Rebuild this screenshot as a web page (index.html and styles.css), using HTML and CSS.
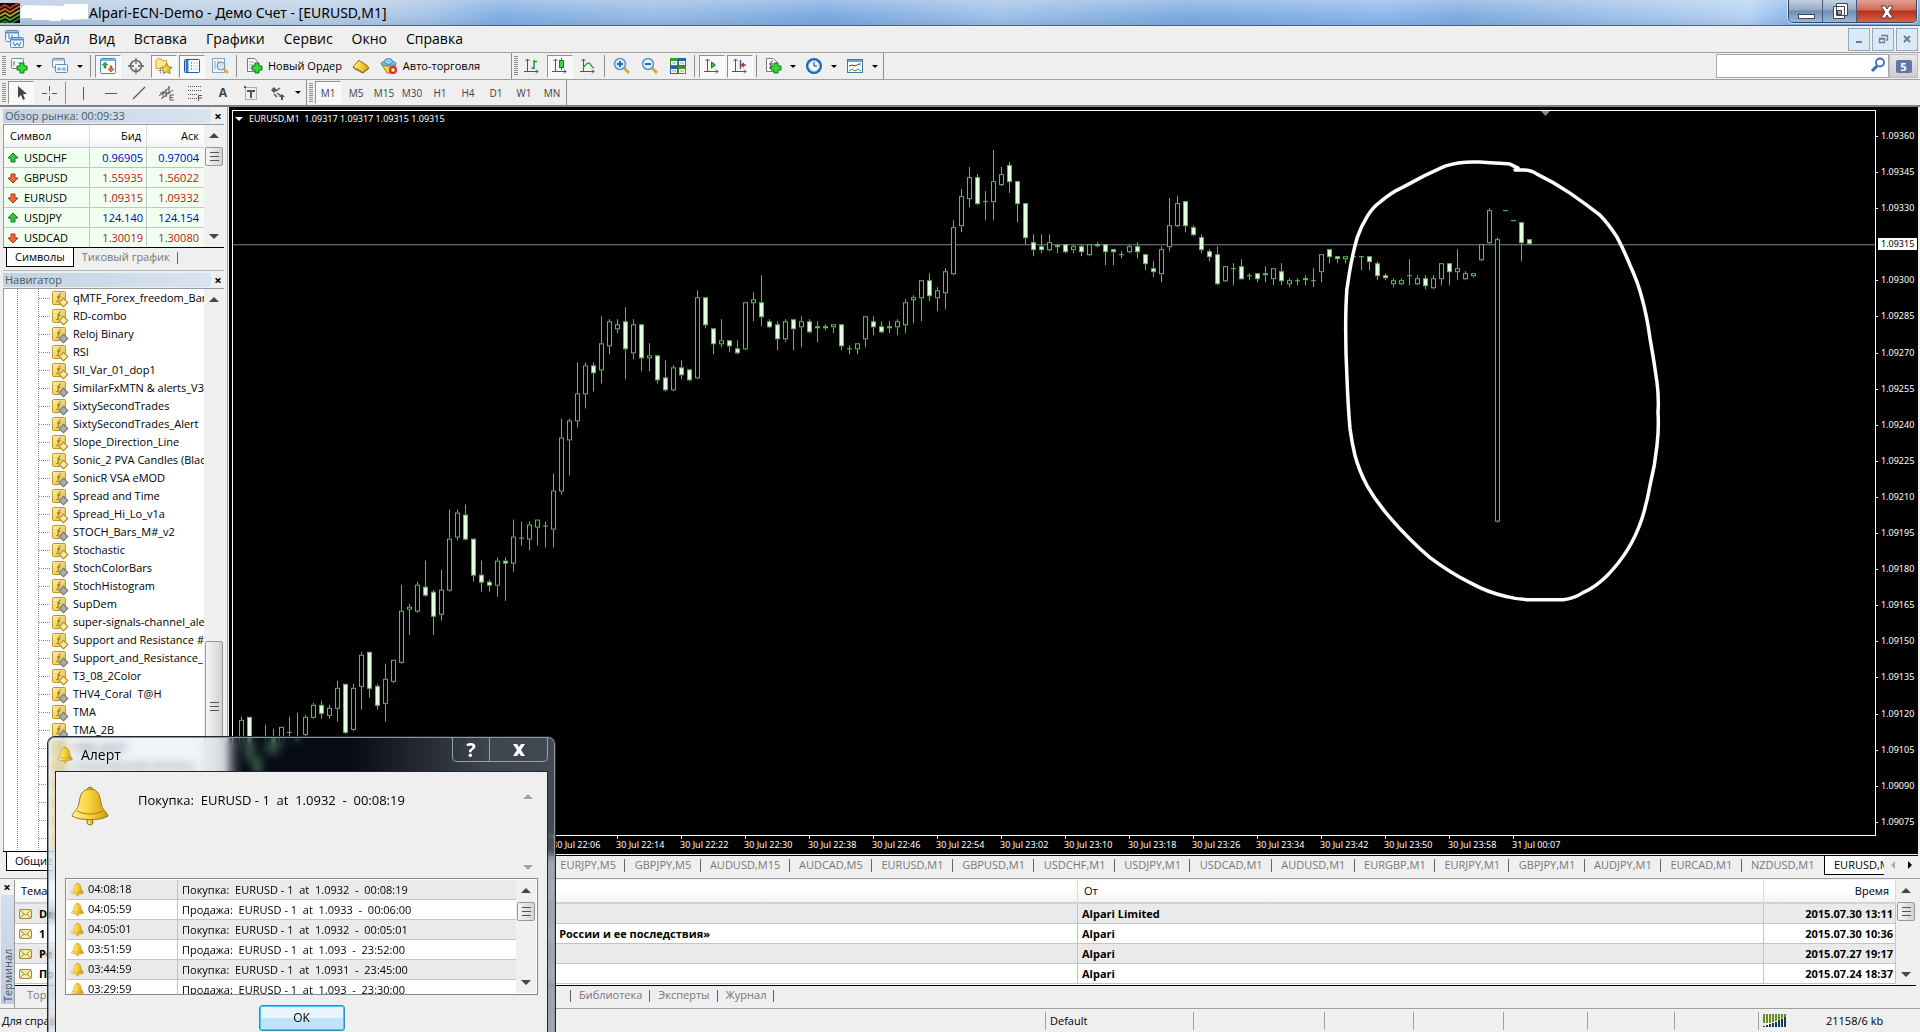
FILE: index.html
```html
<!DOCTYPE html>
<html lang="ru">
<head>
<meta charset="utf-8">
<title>Alpari-ECN-Demo - Демо Счет - [EURUSD,M1]</title>
<link rel="stylesheet" href="styles.css">
</head>
<body>
<svg class="defs" aria-hidden="true">
  <defs>
    <linearGradient id="gold" x1="0" y1="0" x2="1" y2="0"><stop offset="0" stop-color="#fff2a0"/><stop offset=".45" stop-color="#f8d63c"/><stop offset="1" stop-color="#cf9c14"/></linearGradient>
    <linearGradient id="fy" x1="0" y1="0" x2="1" y2="1"><stop offset="0" stop-color="#fff0a8"/><stop offset="1" stop-color="#e3b93a"/></linearGradient>
  </defs>
  <symbol id="new-chart" viewBox="0 0 18 18"><rect x="1.500" y="1.500" width="12" height="10" rx="1" fill="#f4faff" stroke="#5a8db8"/><path d="M4 4v5M3 6h2M8 6h3" stroke="#5a8db8"/><path d="M10 6h4v3h3v4h-3v3h-4v-3H7V9h3z" fill="#2fdc3a" stroke="#0a7a14"/></symbol>
  <symbol id="profiles" viewBox="0 0 18 18"><g fill="#eef6fd" stroke="#5a8db8"><rect x="1.500" y="1.500" width="12" height="9" rx="1"/><rect x="4.500" y="7.500" width="12" height="8" rx="1"/></g><path d="M2 3h11M6 12h9M8 10v4M13 10v4" stroke="#6d9cc4"/></symbol>
  <symbol id="market" viewBox="0 0 18 18"><rect x="1.500" y="1.500" width="15" height="15" rx="1" fill="#fff" stroke="#4a88c0"/><path d="M2 3h14" stroke="#7db4e0" stroke-width="2"/><path d="M6 5l3 3H7v3H5V8H3z" fill="#38b838" stroke="#1a7a1a" stroke-width=".6"/><path d="M12 15l-3-3h2V9h2v3h2z" fill="#f07040" stroke="#b03010" stroke-width=".6"/></symbol>
  <symbol id="target" viewBox="0 0 18 18"><circle cx="9" cy="9" r="5.500" fill="none" stroke="#666" stroke-width="1.500"/><path d="M9 1v6M9 11v6M1 9h6M11 9h6" stroke="#666" stroke-width="1.300"/></symbol>
  <symbol id="nav" viewBox="0 0 20 18"><path d="M1 12V3l2-2h4l1 2h5v8z" fill="#ffe98a" stroke="#c79c22"/><path d="M6 12v5M4 14h5" stroke="#333" stroke-dasharray="1 1"/><path d="M13 6l2 4 4 .5-3 3 .8 4-3.800-2-3.800 2 .8-4-3-3 4-.5z" fill="url(#gold)" stroke="#a87a10"/></symbol>
  <symbol id="term" viewBox="0 0 18 18"><rect x="1.500" y="2.500" width="15" height="13" rx="1" fill="#fff" stroke="#1d5b9c"/><path d="M4 3v12" stroke="#2f7cc8" stroke-width="3"/><path d="M8 6h1M8 9h1M8 12h1" stroke="#333"/><path d="M10 6h5M10 9h5M10 12h5" stroke="#b8cde0"/></symbol>
  <symbol id="tester" viewBox="0 0 18 18"><rect x="1.500" y="1.500" width="12" height="14" fill="#f1f7fc" stroke="#7ba6cb"/><path d="M4 4v8M7 3v8M10 4v6" stroke="#7ba6cb"/><circle cx="10" cy="9" r="4" fill="#cfe6f6" fill-opacity=".8" stroke="#5c8fb8"/><path d="M13 12l4 4" stroke="#e0ac32" stroke-width="2.500"/></symbol>
  <symbol id="order" viewBox="0 0 18 18"><path d="M2.500 1.500h7l3 3v10h-10z" fill="#fff" stroke="#777"/><path d="M4 5h5M4 8h6M4 11h4" stroke="#999"/><path d="M10 6h4v3h3v4h-3v3h-4v-3H7V9h3z" fill="#2fdc3a" stroke="#0a7a14"/></symbol>
  <symbol id="book" viewBox="0 0 18 18"><path d="M1 10l6-7c1 2 8 4 10 8l-6 5C9 13 4 12 1 10z" fill="url(#gold)" stroke="#8f6508"/><path d="M1 10c1 3 6 3 9 6l7-5" fill="none" stroke="#8f6508"/></symbol>
  <symbol id="auto" viewBox="0 0 18 18"><path d="M2 8h14l-4 8H7z" fill="#f5d040" stroke="#a87a10"/><ellipse cx="8.500" cy="6.500" rx="7.500" ry="2.500" fill="#7cc0e8" stroke="#3a86b8"/><ellipse cx="8.500" cy="4.500" rx="4" ry="3" fill="#8fd0f2" stroke="#3a86b8"/><circle cx="13" cy="13" r="4" fill="#d8301c"/><rect x="11.500" y="11.500" width="3" height="3" fill="#fff"/></symbol>
  <symbol id="axes" viewBox="0 0 18 18"><path d="M4.500 2v13M1 14.500h14M2.500 4l2-2 2 2M13 12.500l2 2-2 2" fill="none" stroke="#555"/></symbol>
  <symbol id="bars" viewBox="0 0 18 18"><use href="#axes"/><path d="M11 3v9M8.500 11H11M11 4.500h3" stroke="#1e9a28" stroke-width="1.500"/></symbol>
  <symbol id="candles" viewBox="0 0 18 18"><use href="#axes"/><path d="M10.500 1v12" stroke="#1a7a20"/><rect x="8.500" y="3.500" width="4" height="7" fill="#38d840" stroke="#1a7a20"/></symbol>
  <symbol id="line" viewBox="0 0 18 18"><use href="#axes"/><path d="M4 11c2-2 4-6 6-5s2 4 5 5" fill="none" stroke="#2a9a34" stroke-width="1.300"/></symbol>
  <symbol id="zin" viewBox="0 0 18 18"><path d="M11 11l5 5" stroke="#d8a83a" stroke-width="3"/><circle cx="7" cy="7" r="5.500" fill="#d6ebfc" stroke="#5c96cc" stroke-width="1.500"/><path d="M4 7h6M7 4v6" stroke="#2b6cb0" stroke-width="2"/></symbol>
  <symbol id="zout" viewBox="0 0 18 18"><path d="M11 11l5 5" stroke="#d8a83a" stroke-width="3"/><circle cx="7" cy="7" r="5.500" fill="#d6ebfc" stroke="#5c96cc" stroke-width="1.500"/><path d="M4 7h6" stroke="#2b6cb0" stroke-width="2"/></symbol>
  <symbol id="tiles" viewBox="0 0 18 18"><path d="M1 1h8v8H1zM9 9h8v8H9z" fill="#3c9a1c"/><path d="M9 1h8v8H9zM1 9h8v8H1z" fill="#2a62a8"/><path d="M2 4h6v4H2zM10 4h6v4h-6zM2 12h6v4H2zM10 12h6v4h-6z" fill="#f4f8ff"/><path d="M3 6h4M11 6h4M3 14h4M11 14h4" stroke="#8ab"/></symbol>
  <symbol id="scroll" viewBox="0 0 18 18"><use href="#axes"/><path d="M8.500 5v6l4-3z" fill="#38c040" stroke="#1a7a20"/></symbol>
  <symbol id="shift" viewBox="0 0 18 18"><use href="#axes"/><path d="M9.500 3v9" stroke="#2a62a8" stroke-width="1.500"/><path d="M15 8h-4M13 6l-2.500 2 2.500 2" fill="none" stroke="#b83c18" stroke-width="1.500"/></symbol>
  <symbol id="indic" viewBox="0 0 18 18"><path d="M2.500 1.500h7l3 3v10h-10z" fill="#fff" stroke="#777"/><path d="M9 4H8c-1 0-1 1-1.500 7H5M5 7h4" fill="none" stroke="#444"/><path d="M10 6h4v3h3v4h-3v3h-4v-3H7V9h3z" fill="#2fdc3a" stroke="#0a7a14"/></symbol>
  <symbol id="clock" viewBox="0 0 18 18"><circle cx="9" cy="9" r="8" fill="#1c66b4"/><circle cx="9" cy="9" r="5.500" fill="#f2f8ff" stroke="#7db7e8"/><path d="M9 5v4h3" fill="none" stroke="#234"/></symbol>
  <symbol id="template" viewBox="0 0 18 18"><rect x="1.500" y="2.500" width="15" height="13" fill="#fff" stroke="#3f78ac"/><path d="M2 4h14" stroke="#6aa4d8" stroke-width="2"/><path d="M3 9l3-1 3 1 4-2h2" fill="none" stroke="#7a3020"/><path d="M3 14l3-2 3 2 3-2 3 2" fill="none" stroke="#2a9a34"/></symbol>
  <symbol id="cursor" viewBox="0 0 18 18"><path d="M6 2v12l3-3 2 5 2-1-2-5h4z" fill="#444"/></symbol>
  <symbol id="cross" viewBox="0 0 18 18"><path d="M9.500 2v5M9.500 12v5M2 9.500h5M12 9.500h5M9 9.500h1" stroke="#555"/></symbol>
  <symbol id="vl" viewBox="0 0 18 18"><path d="M9.500 3v13" stroke="#555"/></symbol>
  <symbol id="hl" viewBox="0 0 18 18"><path d="M3 9.500h12" stroke="#555"/></symbol>
  <symbol id="dl" viewBox="0 0 18 18"><path d="M3 15L15 3" stroke="#555" stroke-width="1.200"/></symbol>
  <symbol id="chan" viewBox="0 0 18 18"><path d="M1 12l11-9M3 15L15 6M5 7v7M8 5v8M11 2v8M2 9h9" stroke="#555"/><path d="M16 11h-4v5h4M12 13.500h3" fill="none" stroke="#555"/></symbol>
  <symbol id="fib" viewBox="0 0 18 18"><path d="M2 2.500h14M2 6.500h14M2 10.500h9M2 14.500h9" stroke="#555" stroke-dasharray="1 1"/><path d="M16 11.500h-3.500V17M13 14h3" fill="none" stroke="#555"/></symbol>
  <symbol id="label" viewBox="0 0 18 18"><rect x="3.500" y="3.500" width="11" height="12" fill="none" stroke="#666" stroke-dasharray="1 1"/><path d="M2 2h2v2H2zM5 6h8v2h-3v6H8V8H5z" fill="#555"/></symbol>
  <symbol id="arrows" viewBox="0 0 18 18"><path d="M5 3l3 3-3 3-3-3zM13 10l3 3h-2v3h-2v-3h-2z" fill="#555"/><path d="M11 4L7 7M8 9l4 3M5 10l3 3" stroke="#555" stroke-width="1.500"/></symbol>
  <symbol id="fx" viewBox="0 0 16 16"><rect x="1.500" y="1.500" width="13" height="13" rx="1" fill="url(#fy)" stroke="#c09a28"/><path d="M10 4C8 3.500 8 5 7 11.500H5.500M6 7h3.500" fill="none" stroke="#8a6a14"/></symbol>
  <symbol id="up" viewBox="0 0 12 12"><path d="M6 1l5 5H8v4H4V6H1z" fill="#3cc24a" stroke="#127a20"/></symbol>
  <symbol id="down" viewBox="0 0 12 12"><path d="M6 11L1 6h3V2h4v4h3z" fill="#f46a3c" stroke="#a83010"/></symbol>
  <symbol id="bell" viewBox="0 0 38 40"><ellipse cx="19" cy="36" rx="3" ry="3" fill="url(#gold)" stroke="#9a7210"/><circle cx="19" cy="3.500" r="2.500" fill="url(#gold)" stroke="#9a7210"/><path d="M19 3c-9 0-10 8-11 14-1 7-6 9-7 13 8 5 28 5 36 0-1-4-6-6-7-13C29 11 28 3 19 3z" fill="url(#gold)" stroke="#9a7210"/><path d="M6 25c8 4 18 4 26 0" fill="none" stroke="#a87a10"/></symbol>
  <symbol id="mail" viewBox="0 0 14 12"><rect x=".5" y="1.500" width="12" height="9" rx="1" fill="#f8ecac" stroke="#a08c3c"/><path d="M1 2l5.500 5L12 2M1 10l4-4M12 10L8 6" fill="none" stroke="#a08c3c"/></symbol>
</svg>

<header class="titlebar">
  <svg class="logo" viewBox="0 0 20 20" preserveAspectRatio="none"><rect width="20" height="20" fill="#080808"/><g fill="none" stroke-width="2"><path d="M0 5l5-3 5 3 5-3 5-2" stroke="#c03020"/><path d="M0 9l5-3 5 3 5-3 5-3" stroke="#d06020"/><path d="M0 13l5-3 5 3 5-3 5-3" stroke="#b0a020"/><path d="M0 17l5-3 5 3 5-3 5-3" stroke="#50a020"/><path d="M0 21l5-3 5 3 5-3 5-3" stroke="#207820"/></g></svg>
  <svg class="scrub" viewBox="0 0 68 17" preserveAspectRatio="none"><path d="M1 4L4 1l40 1V0h24v15l-24 1-3-1v2H31l-3-1H13l-2-2H0z" fill="#fff"/></svg>
  <h1>Alpari-ECN-Demo - Демо Счет - [EURUSD,M1]</h1>
  <div class="winctl">
    <button aria-label="Свернуть"><svg width="20" height="18"><rect x="2.500" y="12.500" width="16" height="4" fill="#fff" stroke="#445"/></svg></button>
    <button aria-label="Развернуть"><svg width="20" height="18"><path d="M6.500 1.500h11v12h-11zM3.500 4.500h11v12h-11z" fill="#fff" stroke="#445"/><rect x="7.500" y="8.500" width="4" height="4" fill="#9ab" stroke="#445"/></svg></button>
    <button class="close" aria-label="Закрыть"><svg width="20" height="18"><path d="M4 4h4l2 3 2-3h4l-4 6 4 6h-4l-2-3-2 3H4l4-6z" fill="#fff" stroke="#544"/></svg></button>
  </div>
</header>

<nav class="menubar">
  <svg width="22" height="20"><g fill="#eaf3fb" stroke="#5c8ac4"><rect x="1.500" y="1.500" width="13" height="11" rx="1"/><rect x="6.500" y="8.500" width="13" height="10" rx="1"/></g><path d="M2 3.500h12M7 10.500h12" stroke="#5c8ac4" stroke-width="2"/><path d="M5 5v5M8 6v4M9 13l2 4 2-3 2 3 2-4" fill="none" stroke="#3c78c0"/></svg>
  <button>Файл</button><button>Вид</button><button>Вставка</button><button>Графики</button><button>Сервис</button><button>Окно</button><button>Справка</button>
  <div class="mdi">
    <button aria-label="Свернуть окно"><svg width="12" height="12"><path d="M3 9h6" stroke="#6a7f94" stroke-width="2"/></svg></button>
    <button aria-label="Восстановить окно"><svg width="12" height="12"><path d="M4 2.500h6.500V7H9M2.500 5.500h5v4h-5zM2 6h6" fill="none" stroke="#6a7f94" stroke-width="1.300"/></svg></button>
    <button aria-label="Закрыть окно"><svg width="12" height="12"><path d="M3 3l6 6M9 3L3 9" stroke="#6a7f94" stroke-width="2"/></svg></button>
  </div>
</nav>

<div class="toolrow">
  <div class="toolbar">
    <i class="grip"></i>
    <button class="drop" aria-label="Новый график"><svg><use href="#new-chart"/></svg></button>
    <button class="drop" aria-label="Профили"><svg><use href="#profiles"/></svg></button>
    <i class="sep"></i>
    <button class="on" aria-label="Обзор рынка"><svg><use href="#market"/></svg></button>
    <button aria-label="Окно данных"><svg><use href="#target"/></svg></button>
    <button class="on" aria-label="Навигатор"><svg><use href="#nav"/></svg></button>
    <button class="on" aria-label="Терминал"><svg><use href="#term"/></svg></button>
    <button aria-label="Тестер"><svg><use href="#tester"/></svg></button>
    <i class="sep"></i>
    <button class="wide"><svg><use href="#order"/></svg>Новый Ордер</button>
    <button aria-label="MetaEditor"><svg><use href="#book"/></svg></button>
    <button class="wide auto"><svg><use href="#auto"/></svg>Авто-торговля</button>
  </div>
  <div class="toolbar">
    <i class="grip"></i>
    <button aria-label="Бары"><svg><use href="#bars"/></svg></button>
    <button class="on" aria-label="Свечи"><svg><use href="#candles"/></svg></button>
    <button aria-label="Линия"><svg><use href="#line"/></svg></button>
    <i class="sep"></i>
    <button aria-label="Увеличить"><svg><use href="#zin"/></svg></button>
    <button aria-label="Уменьшить"><svg><use href="#zout"/></svg></button>
    <button aria-label="Мозаика"><svg><use href="#tiles"/></svg></button>
    <i class="sep"></i>
    <button class="on" aria-label="Автопрокрутка"><svg><use href="#scroll"/></svg></button>
    <button class="on" aria-label="Сдвиг графика"><svg><use href="#shift"/></svg></button>
    <i class="sep"></i>
    <button class="drop" aria-label="Индикаторы"><svg><use href="#indic"/></svg></button>
    <button class="drop" aria-label="Периоды"><svg><use href="#clock"/></svg></button>
    <button class="drop" aria-label="Шаблоны"><svg><use href="#template"/></svg></button>
  </div>
  <div class="search">
    <input type="search" aria-label="Поиск">
    <svg width="16" height="16"><circle cx="10" cy="5.500" r="4" fill="none" stroke="#3c6cc0" stroke-width="1.800"/><path d="M7 9l-5 5" stroke="#3c6cc0" stroke-width="3"/></svg>
    <button aria-label="Сообщения"><span>5</span></button>
  </div>
</div>

<div class="toolrow second">
  <div class="toolbar">
    <i class="grip"></i>
    <button class="on" aria-label="Курсор"><svg><use href="#cursor"/></svg></button>
    <button aria-label="Перекрестие"><svg><use href="#cross"/></svg></button>
    <i class="sep"></i>
    <button aria-label="Вертикальная линия"><svg><use href="#vl"/></svg></button>
    <button aria-label="Горизонтальная линия"><svg><use href="#hl"/></svg></button>
    <button aria-label="Трендовая линия"><svg><use href="#dl"/></svg></button>
    <button aria-label="Канал"><svg><use href="#chan"/></svg></button>
    <button aria-label="Фибоначчи"><svg><use href="#fib"/></svg></button>
    <button class="letter" aria-label="Текст">A</button>
    <button aria-label="Метка"><svg><use href="#label"/></svg></button>
    <button class="drop" aria-label="Стрелки"><svg><use href="#arrows"/></svg></button>
  </div>
  <div class="toolbar">
    <i class="grip"></i>
    <button class="on">M1</button><button>M5</button><button>M15</button><button>M30</button><button>H1</button><button>H4</button><button>D1</button><button>W1</button><button>MN</button>
  </div>
</div>

<main>
  <aside>
    <section class="market">
      <header class="panel-head"><h2>Обзор рынка: 00:09:33</h2><button aria-label="Закрыть">×</button></header>
      <div class="panel-body">
        <table class="quotes">
          <thead><tr><th>Символ</th><th>Бид</th><th>Аск</th></tr></thead>
          <tbody>
            <tr class="rise"><td><svg><use href="#up"/></svg>USDCHF</td><td>0.96905</td><td>0.97004</td></tr>
            <tr class="fall"><td><svg><use href="#down"/></svg>GBPUSD</td><td>1.55935</td><td>1.56022</td></tr>
            <tr class="fall"><td><svg><use href="#down"/></svg>EURUSD</td><td>1.09315</td><td>1.09332</td></tr>
            <tr class="rise"><td><svg><use href="#up"/></svg>USDJPY</td><td>124.140</td><td>124.154</td></tr>
            <tr class="fall"><td><svg><use href="#down"/></svg>USDCAD</td><td>1.30019</td><td>1.30080</td></tr>
          </tbody>
        </table>
        <div class="sbar"><i class="au"></i><i class="thumb"></i><i class="ad"></i></div>
      </div>
      <div class="tabs"><button class="active">Символы</button><button>Тиковый график</button></div>
    </section>
    <section class="navigator">
      <header class="panel-head"><h2>Навигатор</h2><button aria-label="Закрыть">×</button></header>
      <div class="panel-body">
        <ul id="tree"></ul>
        <div class="sbar"><i class="au"></i><i class="thumb tall"></i></div>
      </div>
      <div class="tabs"><button class="active">Общие</button></div>
    </section>
  </aside>

  <section class="work">
    <div class="chart">
      <div class="plot">
        <svg id="plot" viewBox="232 110 1644 725" preserveAspectRatio="none" role="img" aria-label="EURUSD M1">
          <path d="M233 244.500H1875" stroke="#7f8790"/>
          <path d="M1541 111h9l-4.500 5z" fill="#7f8790"/>
          <g id="candles-layer"></g>
          <path class="ink" d="M1518 168L1510 164C1500 163 1490 163 1480 162Q1460 161 1445 166Q1424 175 1403 187Q1390 193 1380 202Q1373 207 1368 215Q1361 226 1357 238Q1352 256 1349 275Q1346 290 1346 305Q1345 340 1347 378Q1348 405 1350 428Q1352 443 1355 455Q1359 470 1367 485Q1376 501 1390 517Q1409 539 1430 557Q1450 572 1470 582Q1488 592 1507 596Q1518 599 1530 599H1563Q1574 598 1583 592Q1596 586 1607 575Q1618 564 1627 550Q1636 536 1642 518Q1647 502 1650 485Q1655 465 1657 445Q1659 428 1658 412Q1659 397 1657 382Q1654 360 1650 338Q1647 316 1642 298Q1638 282 1630 265Q1624 250 1617 237Q1609 224 1600 215Q1586 204 1570 193Q1554 182 1537 174Q1531 170 1524 170H1515"/>
        </svg>
        <p class="caption"><i></i>EURUSD,M1&nbsp; 1.09317 1.09317 1.09315 1.09315</p>
      </div>
      <ol class="prices" id="prices"></ol>
      <ol class="times" id="times"></ol>
    </div>
    <div class="chart-tabs">
      <div class="strip">
        <button>EURJPY,M5</button><button>GBPJPY,M5</button><button>AUDUSD,M15</button><button>AUDCAD,M5</button><button>EURUSD,M1</button><button>GBPUSD,M1</button><button>USDCHF,M1</button><button>USDJPY,M1</button><button>USDCAD,M1</button><button>AUDUSD,M1</button><button>EURGBP,M1</button><button>EURJPY,M1</button><button>GBPJPY,M1</button><button>AUDJPY,M1</button><button>EURCAD,M1</button><button>NZDUSD,M1</button>
      </div>
      <button class="active">EURUSD,M1</button>
      <button class="arrow dim" aria-label="Назад"></button><button class="arrow next" aria-label="Вперёд"></button>
    </div>
  </section>
</main>

<section class="terminal">
  <div class="gutter"><button aria-label="Закрыть">×</button><span>Терминал</span></div>
  <div class="term-main">
    <div class="term-body">
      <table class="mailbox">
        <thead><tr><th>Тема</th><th>От</th><th>Время</th></tr></thead>
        <tbody>
          <tr><td><svg><use href="#mail"/></svg>Demo</td><td>Alpari Limited</td><td>2015.07.30 13:11</td></tr>
          <tr><td><svg><use href="#mail"/></svg>1 <span>России и ее последствия»</span></td><td>Alpari</td><td>2015.07.30 10:36</td></tr>
          <tr><td><svg><use href="#mail"/></svg>Ре</td><td>Alpari</td><td>2015.07.27 19:17</td></tr>
          <tr><td><svg><use href="#mail"/></svg>По</td><td>Alpari</td><td>2015.07.24 18:37</td></tr>
        </tbody>
      </table>
      <div class="sbar"><i class="au"></i><i class="thumb"></i><i class="ad"></i></div>
    </div>
    <div class="tabs"><button class="first">Торговля</button><button>Библиотека</button><button>Эксперты</button><button>Журнал</button></div>
  </div>
</section>

<footer class="status">
  <span>Для справки</span><span>Default</span><span></span><span></span><span></span><span></span><span></span><span></span>
  <span class="traffic"><svg width="24" height="13"><path d="M0 4.500h23" stroke="#6a8c1c" stroke-width="9" stroke-dasharray="2 1"/><path d="M0 12L23 3v10H0z" fill="#efefef"/><path d="M1 13v-1M4 13v-2M7 13v-3M10 13V9M13 13V8M16 13V6M19 13V5M22 13V3" stroke="#143c58" stroke-width="2"/></svg>21158/6 kb</span>
</footer>

<div class="alert" role="dialog" aria-labelledby="alert-title">
  <header><svg width="16" height="18"><use href="#bell"/></svg><h2 id="alert-title">Алерт</h2>
    <div class="alert-ctl"><button aria-label="Справка">?</button><button aria-label="Закрыть"><svg width="16" height="14"><path d="M2 1h4l2 3 2-3h4L10 7l4 6h-4L8 10l-2 3H2l4-6z" fill="#fff"/></svg></button></div>
  </header>
  <div class="alert-body">
    <div class="message"><svg width="38" height="40"><use href="#bell"/></svg><p>Покупка:&nbsp; EURUSD - 1&nbsp; at&nbsp; 1.0932&nbsp; -&nbsp; 00:08:19</p><div class="sbar faint"><i class="au"></i><i class="ad"></i></div></div>
    <div class="log">
      <table>
        <tr><td><svg><use href="#bell"/></svg>04:08:18</td><td>Покупка:&nbsp; EURUSD - 1&nbsp; at&nbsp; 1.0932&nbsp; -&nbsp; 00:08:19</td></tr>
        <tr><td><svg><use href="#bell"/></svg>04:05:59</td><td>Продажа:&nbsp; EURUSD - 1&nbsp; at&nbsp; 1.0933&nbsp; -&nbsp; 00:06:00</td></tr>
        <tr><td><svg><use href="#bell"/></svg>04:05:01</td><td>Покупка:&nbsp; EURUSD - 1&nbsp; at&nbsp; 1.0932&nbsp; -&nbsp; 00:05:01</td></tr>
        <tr><td><svg><use href="#bell"/></svg>03:51:59</td><td>Продажа:&nbsp; EURUSD - 1&nbsp; at&nbsp; 1.093&nbsp; -&nbsp; 23:52:00</td></tr>
        <tr><td><svg><use href="#bell"/></svg>03:44:59</td><td>Покупка:&nbsp; EURUSD - 1&nbsp; at&nbsp; 1.0931&nbsp; -&nbsp; 23:45:00</td></tr>
        <tr><td><svg><use href="#bell"/></svg>03:29:59</td><td>Продажа:&nbsp; EURUSD - 1&nbsp; at&nbsp; 1.093&nbsp; -&nbsp; 23:30:00</td></tr>
      </table>
      <div class="sbar"><i class="au"></i><i class="thumb"></i><i class="ad"></i></div>
    </div>
    <button class="ok">OK</button>
  </div>
</div>
<script src="app.js"></script>
</body>
</html>
```

FILE: styles.css
```css
* { box-sizing: border-box; }
body {
  margin: 0; height: 100vh; min-height: 700px; display: flex; flex-direction: column;
  background: #efefef; color: #000; overflow: hidden; position: relative;
  font: 11px/14px "Open Sans", "Noto Sans", sans-serif;
}
h1, h2, p, ol, ul { margin: 0; padding: 0; font-weight: normal; list-style: none; }
button { font: inherit; color: inherit; background: none; border: 0; padding: 0; margin: 0; }
table { border-collapse: separate; border-spacing: 0; }
td, th { padding: 0; font-weight: normal; text-align: left; white-space: nowrap; }
.defs { position: absolute; width: 0; height: 0; }

/* title bar */
.titlebar {
  flex: none; height: 26px; display: flex; align-items: center; border-bottom: 1px solid #4d6284; padding-right: 3px;
  background:
    linear-gradient(rgba(255,255,255,.25), rgba(255,255,255,0) 60%, rgba(40,80,120,.12)),
    linear-gradient(90deg, #b4cae2 0, #bfd2e6 16%, #a9c6e6 22%, #84b0e4 26%, #9abde4 34%, #7fabe2 43%, #a2c2e8 52%, #80ace0 62%, #8fb9ea 72%, #84aee0 76%, #abc9ec 87%, #b8d4f2 91%, #7fb0ee 94%, #86b0e0 100%);
}
.logo { width: 20px; height: 20px; }
.scrub { width: 68px; height: 17px; }
.titlebar h1 { font: 14px/24px "Noto Sans", sans-serif; padding-left: 1px; flex: 1; }
.winctl { display: flex; align-self: flex-start; height: 23px; border: 1px solid #34465e; border-top: 0; border-radius: 0 0 5px 5px; overflow: hidden; box-shadow: 0 0 0 1px rgba(255,255,255,.6); }
.winctl button { width: 34px; background: linear-gradient(#c3d2e4, #94a9c4 45%, #6f8cb0 50%, #9db9d8); border-right: 1px solid #44597a; display: grid; place-items: center; }
.winctl .close { width: 59px; border: 0; background: linear-gradient(#e4a090, #cf6a55 45%, #b8301a 50%, #d8604a); }

/* menu */
.menubar { flex: none; height: 27px; display: flex; align-items: center; gap: 19px; padding: 0 2px 0 4px; border-bottom: 1px solid #a0a0a0; font-size: 14px; }
.menubar > svg { margin-right: -11px; }
.mdi { display: flex; gap: 2px; margin-left: auto; }
.mdi button { width: 22px; height: 23px; border: 1px solid #92a8bc; background: #dce9f6; display: grid; place-items: center; }

/* toolbars */
.toolrow { flex: none; height: 27px; display: flex; border-bottom: 1px solid #a0a0a0; }
.toolrow.second { border-bottom: 2px solid #808080; }
.toolbar { display: flex; align-items: center; border-right: 1px solid #8c8c8c; color: #333; }
.grip { width: 4px; height: 20px; margin: 0 0 0 2px; background: repeating-linear-gradient(#8c8c8c 0 1px, transparent 1px 2px); }
.sep { width: 1px; height: 22px; margin: 0 3px 0 2px; background: #8c8c8c; }
.toolbar button { width: 26px; height: 23px; margin: 0 1px; display: flex; align-items: center; justify-content: center; border: 1px solid transparent; }
.toolbar button svg { width: 18px; height: 18px; flex: none; }
.toolbar .on { border-color: #909090 #fff #fff #909090; background: #f8f8f8; }
.toolbar .drop { width: 39px; justify-content: flex-start; padding-left: 2px; }
.toolbar .drop::after { content: ""; border: 3px solid transparent; border-top-color: #000; border-bottom: 0; margin-left: 8px; }
.toolbar .wide { width: auto; padding: 0 3px; gap: 5px; color: #000; }
.toolbar .auto { padding-right: 29px; }
.second .grip { margin-right: 1px; }
.second .toolbar button { color: #444; font-size: 10px; }
.second .toolbar .letter { font-size: 12px; font-weight: bold; }
.search { margin-left: auto; display: flex; align-items: center; position: relative; padding-right: 2px; }
.search input { width: 173px; height: 24px; border: 1px solid #a8a8a8; background: #fff; padding: 0 24px 0 4px; }
.search > svg { position: absolute; left: 154px; top: 4px; }
.search button { width: 29px; height: 24px; border: 1px solid #bbb; background: linear-gradient(#e8e8e8, #ccc); display: grid; place-items: center; }
.search span { background: #6078a8; color: #fff; font-weight: bold; width: 16px; line-height: 13px; border-radius: 2px; }

/* main */
main { flex: 1; min-height: 0; display: grid; grid-template-columns: 228px 1fr; }
aside { display: flex; flex-direction: column; min-height: 0; padding: 0 3px; border-right: 1px solid #a0a0a0; }
.panel-head { display: flex; height: 17px; align-items: center; }
.panel-head h2 { flex: 1; background: linear-gradient(90deg, #c3d2e0, #d8e4f0); color: #4c5864; line-height: 14px; padding-left: 2px; font-size: 11px; }
.panel-head button { width: 12px; font-weight: bold; font-size: 13px; line-height: 14px; margin-left: 1px; }
.panel-body { display: flex; border-top: 1px solid #9a9a9a; border-left: 1px solid #9a9a9a; background: #fff; overflow: hidden; }
.market .panel-body { height: 124px; border-bottom: 1px solid #000; }
.quotes { flex: 1; table-layout: fixed; align-self: flex-start; }
.quotes th { height: 23px; background: linear-gradient(#fff 50%, #f1f4f7); border-bottom: 1px solid #ccc; border-right: 1px solid #dcdcdc; width: 57px; text-align: right; padding-right: 5px; }
.quotes th:first-child { width: 86px; text-align: left; padding-left: 6px; }
.quotes td { height: 20px; background: #f0fff0; border-bottom: 1px solid #c4c4c4; border-right: 1px solid #c4c4c4; text-align: right; padding-right: 3px; }
.quotes td:first-child { text-align: left; padding-left: 3px; }
.quotes th:last-child, .quotes td:last-child { border-right: 0; padding-right: 5px; }
.quotes svg { width: 12px; height: 12px; margin-right: 5px; vertical-align: -2px; }
.rise td + td { color: #0000c8; }
.fall td + td { color: #c81010; }
.sbar { width: 20px; flex: none; background: #f0f0f0; display: flex; flex-direction: column; align-items: center; padding: 8px 1px; }
.sbar .au { border: 5px solid transparent; border-bottom-color: #444; border-top: 0; }
.sbar .ad { border: 5px solid transparent; border-top-color: #444; border-bottom: 0; margin-top: auto; }
.thumb { width: 18px; height: 19px; margin-top: 9px; border: 1px solid #979797; border-radius: 2px; background: repeating-linear-gradient(#555 0 1px, transparent 1px 4px) center 4px / 9px 9px no-repeat, linear-gradient(90deg, #f6f6f6, #d2d2d2); }
.thumb.tall { height: 210px; margin-top: auto; background-position: center 60px, 0 0; }
.navigator .sbar { padding-bottom: 0; }
.faint .au, .faint .ad { opacity: .45; }
.tabs { display: flex; flex: none; color: #777; height: 22px; align-items: flex-start; }
.tabs button { line-height: 18px; padding: 0 8px; position: relative; }
.tabs button:not(.active)::after { content: ""; position: absolute; right: 0; top: 4px; height: 12px; border-right: 1px solid #666; }
.tabs .active { background: #fff; color: #000; border: solid #000; border-width: 0 1px 1px; margin-left: 3px; padding: 0 8px; }
.navigator { flex: 1; display: flex; flex-direction: column; min-height: 0; border-top: 1px solid #b4b4b4; }
.navigator .panel-body { flex: 1; min-height: 0; }
.navigator .tabs { height: 27px; border-top: 1px solid #000; }
.navigator ul { flex: 1; min-width: 0; overflow: hidden; background: repeating-linear-gradient(#888 0 1px, #fff 1px 2px) 13px 0 / 1px 100% no-repeat, repeating-linear-gradient(#888 0 1px, #fff 1px 2px) 34px 0 / 1px 100% no-repeat; }
.navigator li { height: 18px; padding-left: 35px; display: flex; align-items: center; white-space: nowrap; }
.navigator li::before { content: ""; width: 11px; height: 1px; flex: none; background: repeating-linear-gradient(90deg, #888 0 1px, #fff 1px 2px); margin-right: 1px; }
.badge { width: 16px; height: 16px; flex: none; position: relative; margin-right: 6px; }
.badge svg { display: block; width: 16px; height: 16px; }
.badge::after { content: ""; position: absolute; right: 0; bottom: 0; width: 5px; height: 5px; transform: rotate(45deg); background: #fbe9a0; border: 1px solid #a8821a; }
.badge.locked::after { background: #aaa; border-color: #777; }

/* chart */
.work { display: flex; flex-direction: column; min-width: 0; min-height: 0; padding: 0 2px 0 1px; }
.chart { flex: 1; min-height: 0; background: #000; color: #fff; display: grid; grid-template: 1fr 18px / 1fr 42px; padding: 3px 0 0 3px; font: 9px/12px "Noto Sans", sans-serif; }
.plot { position: relative; min-height: 0; border: 1px solid #fff; }
.plot > svg { display: block; position: absolute; left: -1px; top: -1px; width: calc(100% + 2px); height: calc(100% + 2px); }
.ink { fill: none; stroke: #fff; stroke-width: 3.5; stroke-linejoin: round; stroke-linecap: round; }
.caption { position: absolute; left: 2px; top: 2px; display: flex; align-items: center; gap: 6px; }
.caption i { border: 4px solid transparent; border-top-color: #fff; border-bottom: 0; }
.prices { display: flex; flex-direction: column; justify-content: space-between; padding: 20px 1px 8px 0; }
.prices li { padding-left: 5px; position: relative; }
.prices li::before { content: ""; position: absolute; left: 0; top: 6px; width: 2px; height: 1px; background: #fff; }
.prices .now { background: #fff; color: #000; margin-left: 2px; padding-left: 3px; }
.times { grid-column: 1 / 3; display: flex; padding-left: 64px; overflow: hidden; }
.times li { flex: 0 0 64px; padding-top: 3px; position: relative; white-space: nowrap; }
.times li::before { content: ""; position: absolute; left: 1px; top: 0; width: 1px; height: 3px; background: #fff; }
.chart-tabs { flex: none; height: 23px; display: flex; align-items: flex-start; border-top: 1px solid #000; margin-top: 1px; color: #777; padding-left: 322px; }
.strip { flex: 1; min-width: 0; display: flex; }
.strip button { flex: 1 1 auto; line-height: 18px; position: relative; white-space: nowrap; text-align: center; }
.strip button::after { content: ""; position: absolute; right: 0; top: 3px; height: 13px; border-right: 1px solid #666; }
.strip button:last-child::after { display: none; }
.chart-tabs .active { flex: none; width: 60px; overflow: hidden; background: #fff; color: #000; border: solid #000; border-width: 0 0 1px 1px; padding-left: 9px; line-height: 18px; text-align: left; }
.arrow { flex: none; width: 17px; height: 18px; display: grid; place-items: center; }
.arrow::before { content: ""; border: 4px solid transparent; border-left-color: #000; border-right: 0; }
.arrow.dim::before { border: 4px solid transparent; border-right-color: #aaa; border-left: 0; }

/* terminal */
.terminal { flex: none; display: flex; height: 131px; border-top: 1px solid #a0a0a0; border-bottom: 1px solid #a0a0a0; padding: 1px 4px 0 0; }
.gutter { width: 14px; display: flex; flex-direction: column; align-items: center; padding: 1px 0 4px; }
.gutter button { font-weight: bold; font-size: 13px; line-height: 12px; }
.gutter span { writing-mode: vertical-rl; transform: rotate(180deg); flex: 1; width: 13px; background: linear-gradient(#bccddd, #d3e0ee); color: #4c5864; line-height: 13px; margin-top: 2px; padding-top: 2px; }
.term-main { flex: 1; min-width: 0; border-left: 1px solid #9a9a9a; }
.term-body { display: flex; height: 106px; overflow: hidden; border-bottom: 1px solid #000; background: #fff; }
.mailbox { flex: 1; table-layout: fixed; width: 1px; align-self: flex-start; }
.mailbox th { height: 24px; border-bottom: 2px solid #d4d4d4; border-right: 1px solid #d8dde2; background: linear-gradient(#fff 45%, #f2f5f8); padding-left: 6px; }
.mailbox th:nth-child(2) { width: 686px; }
.mailbox th:nth-child(3) { width: 132px; text-align: right; padding-right: 6px; }
.mailbox td { height: 20px; border-bottom: 1px solid #c4c4c4; border-right: 1px solid #c4c4c4; padding-left: 4px; font-weight: bold; }
.mailbox td:last-child { text-align: right; padding-right: 2px; }
.mailbox tr:nth-child(odd) td { background: #eaeaea; }
.mailbox svg { width: 14px; height: 12px; margin-right: 6px; vertical-align: -2px; }
.mailbox span { margin-left: 511px; }
.term-main .tabs { padding-left: 4px; }
.term-main .first { width: 552px; text-align: left; }

/* status */
.status { flex: none; height: 23px; display: grid; grid-template-columns: 1045px 148px 131px 89px 90px 84px 87px 84px 1fr; align-items: center; }
.status span { height: 18px; line-height: 18px; padding-left: 4px; border-left: 1px solid #a0a0a0; }
.status span:first-child { border: 0; padding-left: 2px; }
.status .traffic { display: flex; align-items: center; gap: 39px; }

/* alert window */
.alert {
  position: absolute; left: 48px; bottom: 0; width: 507px; height: 295px; padding: 0 6px; display: flex; flex-direction: column;
  border: 1px solid #8c949c; border-bottom: 0; border-radius: 7px 7px 0 0; box-shadow: 0 0 0 1px #20262c;
  background: linear-gradient(90deg, rgba(214,226,238,.35), rgba(214,226,238,.35) 175px, rgba(16,26,52,.4) 195px, rgba(16,26,52,.4) 300px, rgba(74,82,92,.85) 440px, rgba(110,122,136,.6));
  backdrop-filter: blur(5px);
}
.alert > header { height: 33px; display: flex; align-items: center; padding-left: 2px; flex: none; }
.alert h2 { font-size: 14px; line-height: 20px; margin-left: 8px; flex: 1; }
.alert-ctl { display: flex; align-self: flex-start; border: 1px solid #98a0a8; border-top: 0; border-radius: 0 0 5px 5px; height: 24px; color: #fff; }
.alert-ctl button { width: 36px; font-size: 20px; font-weight: bold; display: grid; place-items: center; }
.alert-ctl button + button { width: 58px; border-left: 1px solid #98a0a8; }
.alert-body { flex: 1; min-height: 0; background: #efefef; border: 1px solid #20262c; border-bottom: 0; padding: 14px 9px 0; display: flex; flex-direction: column; align-items: center; font-size: 11px; }
.message { align-self: stretch; display: flex; height: 92px; }
.message > svg { margin-left: 6px; }
.message p { flex: 1; padding: 7px 0 0 29px; font-size: 13px; }
.log { align-self: stretch; display: flex; height: 117px; overflow: hidden; border: 1px solid #828790; padding: 1px; background: #fff; }
.log table { flex: 1; }
.log tr:nth-child(odd) td { background: #eaeaea; }
.log td { height: 20px; border-bottom: 1px solid #c4c4c4; padding-left: 4px; }
.log td:first-child { width: 111px; border-right: 1px solid #c4c4c4; }
.log svg { width: 13px; height: 15px; margin-right: 4px; vertical-align: -4px; }
.ok { width: 86px; height: 26px; margin-top: 10px; flex: none; border: 1px solid #2c8fbf; border-radius: 3px; box-shadow: inset 0 0 0 1px #48c8f0; background: linear-gradient(#e6f5fd 50%, #bfe4f7 50%); font-size: 12px; }
```

FILE: app.js
```js
// Indicators in the navigator; an asterisk marks a compiled-only file.
const indicators = ["qMTF_Forex_freedom_Bar", "RD-combo", "*Reloj Binary", "RSI", "SII_Var_01_dop1",
  "*SimilarFxMTN & alerts_V3-", "*SixtySecondTrades", "*SixtySecondTrades_Alert", "Slope_Direction_Line",
  "Sonic_2 PVA Candles (Black)", "*SonicR VSA eMOD", "*Spread and Time", "Spread_Hi_Lo_v1a",
  "*STOCH_Bars_M#_v2", "Stochastic", "*StochColorBars", "*StochHistogram", "*SupDem",
  "super-signals-channel_alert", "Support and Resistance #", "*Support_and_Resistance_", "T3_08_2Color",
  "*THV4_Coral  T@H", "*TMA", "*TMA_2B", "TMA_ASCF", "Trend Direction & Force", "Trend", "Trix", "TSI", "TTF", "TTM", "UBS"];
const tree = document.getElementById("tree");
for (const raw of indicators) {
  const locked = raw.startsWith("*");
  const li = document.createElement("li");
  li.innerHTML = `<span class="badge${locked ? " locked" : ""}"><svg><use href="#fx"/></svg></span>`;
  li.append(raw.replace("*", "").replace("  ", " \u00a0"));
  tree.append(li);
}

const prices = document.getElementById("prices");
for (let p = 109360; p >= 109075; p -= 15) {
  const li = document.createElement("li");
  li.textContent = (p / 100000).toFixed(5);
  if (p === 109315) li.className = "now";
  prices.append(li);
}

const times = document.getElementById("times");
for (let m = 21 * 60 + 34; m < 24 * 60; m += 8) {
  const li = document.createElement("li");
  li.textContent = `30 Jul ${Math.floor(m / 60)}:${String(m % 60).padStart(2, "0")}`;
  times.append(li);
}
const lastTime = document.createElement("li");
lastTime.textContent = "31 Jul 00:07";
times.append(lastTime);

// One candle per minute: high, body top, body bottom, low, and 1 for a falling candle.
const candles = [
[716,719,744,744],[716,716,760,760,1],[755,756,775,775,1],[724,745,750,752],[728,737,753,754,1],[726,726,745,748],[716,731,731,737],[712,738,740,742],
[714,716,734,736],[702,704,717,717],[700,704,713,717,1],[704,707,715,717],[680,687,708,720],[683,683,732,732,1],[683,687,729,729],[651,654,686,708],
[651,651,688,696,1],[683,685,705,708,1],[663,678,703,720],[659,659,681,681],[584,610,662,662],[603,606,609,633],[581,584,611,611],[560,586,595,595,1],
[589,591,616,633,1],[569,589,614,619],[509,538,590,590],[509,512,537,539],[504,514,539,539,1],[538,538,575,580,1],[560,574,582,590,1],[579,581,585,590,1],
[557,560,585,595],[557,560,563,599,1],[519,536,563,570],[521,537,537,544],[521,524,539,549],[519,519,527,544],[521,525,525,546],[473,490,529,546],
[418,437,491,493],[418,420,440,474],[362,393,421,426],[362,365,394,407],[362,365,373,390,1],[316,343,370,382],[319,321,346,353],[319,324,329,332],
[307,321,349,378,1],[319,324,353,358],[324,324,358,370,1],[343,355,358,370],[355,355,380,382,1],[360,377,390,390,1],[365,367,390,390],[360,367,375,378,1],
[369,369,380,380,1],[290,297,378,378],[297,297,325,327,1],[328,328,344,353,1],[319,340,344,346],[340,340,346,351,1],[340,348,353,353,1],[302,302,349,349],
[292,299,303,320],[275,302,317,325,1],[319,321,327,327,1],[321,324,339,349,1],[319,321,339,341],[319,319,329,349,1],[316,321,327,346],[319,321,332,332,1],
[321,326,328,341,1],[324,326,328,329,1],[324,324,327,332],[324,324,346,349,1],[345,348,348,353],[343,343,349,353],[316,316,339,346],[316,321,327,334,1],
[321,326,332,332,1],[321,326,328,332,1],[319,321,327,334],[299,302,325,332],[295,297,300,322],[280,280,298,320],[273,280,296,300,1],[287,290,298,310],
[268,271,293,308],[220,227,274,274],[189,196,226,231],[167,177,199,206],[174,177,204,204,1],[191,201,201,219],[150,181,202,219],[167,174,185,185],
[162,165,182,192,1],[181,181,204,221,1],[203,203,238,243,1],[234,242,250,255,1],[234,246,250,252,1],[234,242,250,250],[244,245,247,252,1],[244,244,252,252,1],
[244,246,250,252],[244,246,252,255,1],[244,244,255,255],[242,244,246,246,1],[244,244,252,264,1],[249,249,252,264,1],[251,254,254,257],[244,246,252,252],
[242,246,252,257,1],[254,254,264,269,1],[261,268,272,276,1],[246,249,274,281],[198,225,247,250],[196,203,226,226],[201,201,226,231,1],[225,227,235,235,1],
[234,237,250,252,1],[249,251,257,260,1],[246,254,284,284,1],[266,266,281,281],[263,268,268,284],[259,266,279,279,1],[273,275,275,279],[273,273,279,281,1],
[266,273,275,281,1],[268,268,279,284],[263,271,281,284,1],[278,280,284,286],[278,280,280,284],[275,278,280,284,1],[268,280,280,286],[254,254,272,281],
[249,249,257,262,1],[256,256,259,262,1],[256,256,259,262],[256,256,256,256],[256,256,256,269],[256,256,262,269,1],[261,263,276,279,1],[273,275,278,279,1],
[278,280,284,286],[278,280,284,284],[259,275,275,284],[275,278,284,284],[275,278,286,288,1],[275,278,288,288],[263,263,279,284],[263,263,272,284,1],
[249,268,272,279],[271,273,279,279],[273,273,276,276],[244,244,260,260],[208,210,243,243],[237,239,521,521],[210,210,210,210],[220,220,220,220],
[222,222,243,260,1],[239,239,244,244,1]
];
const parts = candles.map(([high, top, bottom, low, falling], i) => {
  const x = 241 + i * 8 + 0.5;
  const wick = `M${x} ${high}V${top}M${x} ${bottom}V${low + 1}`;
  const body = top === bottom ? `<path d="M${x - 2.5} ${top + 0.5}h5"/>`
    : `<rect x="${x - 2}" y="${top + 0.5}" width="4" height="${bottom - top - 1}" fill="${falling ? "#e4ffe0" : "#000"}"/>`;
  return `<path d="${wick}"/>${body}`;
});
document.getElementById("candles-layer").innerHTML = `<g stroke="#52c452">${parts.join("")}</g>`;
```
